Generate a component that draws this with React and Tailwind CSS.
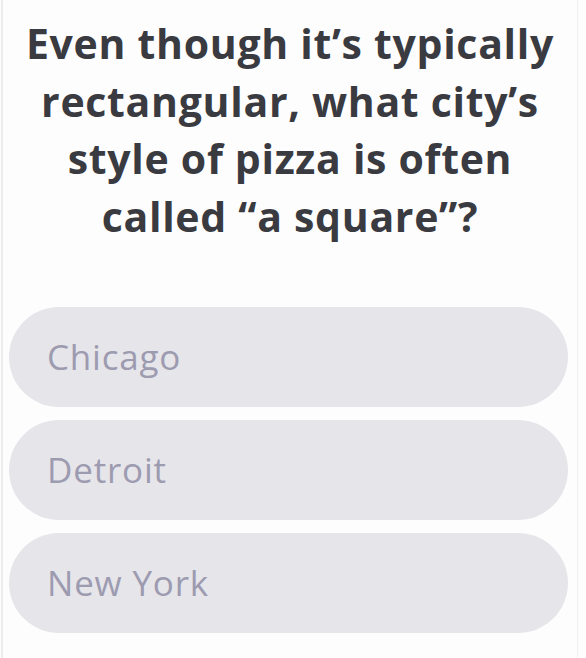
import React from "react";

export default function App() {
  const options = ["Chicago", "Detroit", "New York"];
  return (
    <div className="w-[586px] h-[658px] bg-[#fdfdfd] overflow-hidden flex" style={{ fontFamily: "'Open Sans', 'Noto Sans', sans-serif" }}>
      <div className="w-[2px] bg-[#ececef] ml-[1px]" />
      <div className="flex-1 flex flex-col">
        <h1 className="pt-[15px] text-center text-[41px] leading-[57.5px] font-bold text-[#3a3a41] tracking-[0.7px] whitespace-nowrap">
          Even though it’s typically<br />
          rectangular, what city’s<br />
          style of pizza is often<br />
          called “a square”?
        </h1>
        <div className="mt-[62px] flex flex-col gap-[13px] pl-[6px] pr-[9px]">
          {options.map((o) => (
            <div
              key={o}
              className="h-[100px] rounded-[50px] bg-[#e6e5ea] flex items-center pl-[38px] text-[35px] tracking-[0.8px] text-[#9d9bb0]"
            >
              {o}
            </div>
          ))}
        </div>
      </div>
      <div className="w-[1px] bg-[#f0f0f2] mr-[8px]" />
    </div>
  );
}
